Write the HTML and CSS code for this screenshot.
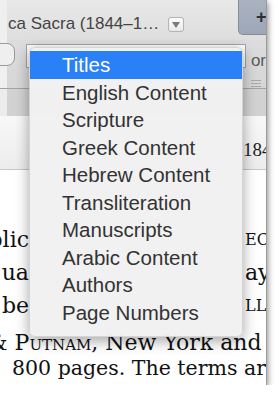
FILE: index.html
```html
<!DOCTYPE html>
<html lang="en">
<head>
    <meta charset="UTF-8">
    <title>Section menu</title>
    <link rel="stylesheet" href="styles.css">
</head>
<body>
    <div class="window">
        <div class="titlebar">
            <span class="title">ca Sacra (1844–1…</span>
            <span class="title-btn">
                <svg width="8" height="6" viewBox="0 0 8 6"><path d="M0 0 H8 L4 6 Z" fill="#7a7a7a"/></svg>
            </span>
            <div class="newtab">+</div>
        </div>
        <div class="toolbar">
            <div class="search"></div>
            <div class="select"></div>
            <div class="toolbar-right">
                <span class="sort">or</span>
                <div class="grip"><i></i><i></i><i></i></div>
            </div>
        </div>
        <div class="band"></div>
        <div class="header"><span class="volume">1844</span></div>
        <div class="doc">
            <div class="line split"><span class="lf"><span>ublic</span></span><span class="rt caps">EC</span></div>
            <div class="line split"><span class="lf"><span>ua</span></span><span class="rt">ay</span></div>
            <div class="line split"><span class="lf"><span>be</span></span><span class="rt caps">LL &amp;</span></div>
            <div class="line amp">&amp; P<span class="sc">utnam</span>, New York and</div>
            <div class="line pages">800 pages. The terms are</div>
        </div>

        <ul class="menu">
            <li class="active">Titles</li>
            <li>English Content</li>
            <li>Scripture</li>
            <li>Greek Content</li>
            <li>Hebrew Content</li>
            <li>Transliteration</li>
            <li>Manuscripts</li>
            <li>Arabic Content</li>
            <li>Authors</li>
            <li>Page Numbers</li>
        </ul>
    </div>
</body>
</html>
```

FILE: styles.css
```css
body {
    margin: 0;
    padding: 0;
    background: #ffffff;
    font-family: "Liberation Sans", Arial, sans-serif;
    overflow: hidden;
}
.window {
    position: relative;
    width: 266px;
    height: 385px;
    border-right: 1px solid #9c9c9c;
    box-shadow: 1px 2px 6px rgba(0,0,0,0.45);
    background: #fff;
    overflow: hidden;
}

/* title bar */
.titlebar {
    display: flex;
    align-items: flex-start;
    height: 40px;
    background: linear-gradient(to right, #efefef 7px, transparent 7px), linear-gradient(#e8e8e8, #dedede);
}
.title {
    padding: 14px 0 0 8px;
    font-size: 17px;
    line-height: 20px;
    color: #444;
    white-space: nowrap;
}
.title-btn {
    display: flex;
    align-items: center;
    justify-content: center;
    width: 14px;
    height: 13px;
    margin: 17px 0 0 9px;
    border: 1px solid #b3b3b3;
    border-radius: 3px;
    background: linear-gradient(#fdfdfd, #e9e9e9);
}
.newtab {
    margin-left: auto;
    width: 10px;
    height: 34px;
    padding-left: 17px;
    border-left: 1px solid #878d98;
    border-bottom: 1px solid #878d98;
    border-bottom-left-radius: 5px;
    background: linear-gradient(#aab2c1, #9ea7b7);
    font-size: 18px;
    font-weight: bold;
    line-height: 34px;
    color: #2f2f2f;
}

/* toolbar */
.toolbar {
    display: flex;
    align-items: flex-start;
    height: 48px;
    background: linear-gradient(to right, #f0f0f0 7px, transparent 7px), linear-gradient(#dcdcdc, #d6d6d6);
}
.search {
    width: 34px;
    height: 21px;
    margin: 3px 0 0 -21px;
    border: 1px solid #9a9a9a;
    border-radius: 8px;
    background: #efefef;
}
.select {
    width: 220px;
    height: 22px;
    margin: 4px 0 0 11px;
    border: 1px solid #a4a4a4;
    background: #fbfbfb;
}
.toolbar-right {
    display: flex;
    flex-direction: column;
    margin-left: 5px;
}
.sort {
    padding-top: 12px;
    font-size: 17px;
    line-height: 18px;
    color: #5a5a5a;
}
.grip {
    display: flex;
    flex-direction: column;
    gap: 2px;
    margin-top: 10px;
    width: 10px;
}
.grip i {
    display: block;
    height: 1px;
    background: #a9a9a9;
}

.band {
    height: 27px;
    border-top: 1px solid #a2a2a2;
    background: linear-gradient(to right, #ececec 7px, transparent 7px), #d2d2d2;
}
.header {
    height: 30px;
    padding: 23px 0 0 243px;
    border-bottom: 1px solid #c8c8c8;
    background: linear-gradient(#f8f8f8, #ececec);
    font-family: "Liberation Serif", serif;
    font-size: 19px;
    line-height: 22px;
    color: #1e1e1e;
    white-space: nowrap;
}

/* document text */
.doc {
    height: 162px;
    padding-top: 53px;
    font-family: "DejaVu Serif", serif;
    font-size: 22px;
    line-height: 33px;
    color: #111;
    white-space: nowrap;
}
.line {
    height: 33px;
}
.split {
    display: flex;
}
.lf {
    display: flex;
    justify-content: flex-end;
    flex: none;
    width: 29px;
    overflow: hidden;
}
.rt {
    margin-left: 216px;
}
.caps {
    font-size: 16px;
}
.sc {
    font-variant: small-caps;
}
.amp {
    height: 26px;
    margin-top: 4px;
    margin-left: -12px;
}
.pages {
    padding-left: 12px;
    font-size: 20.5px;
}

/* popup menu */
.menu {
    position: absolute;
    left: 29px;
    top: 47px;
    width: 214px;
    margin: 0;
    padding: 3px 0 10px;
    list-style: none;
    background: rgba(241,241,241,0.98);
    border: 1px solid rgba(0,0,0,0.12);
    border-radius: 6px;
    box-shadow: 0 4px 14px rgba(0,0,0,0.35);
    box-sizing: border-box;
}
.menu li {
    height: 27.5px;
    padding-left: 32px;
    font-size: 20.5px;
    line-height: 27.5px;
    color: #333;
}
.menu li.active {
    background: #2a80f7;
    color: #fff;
}
```
